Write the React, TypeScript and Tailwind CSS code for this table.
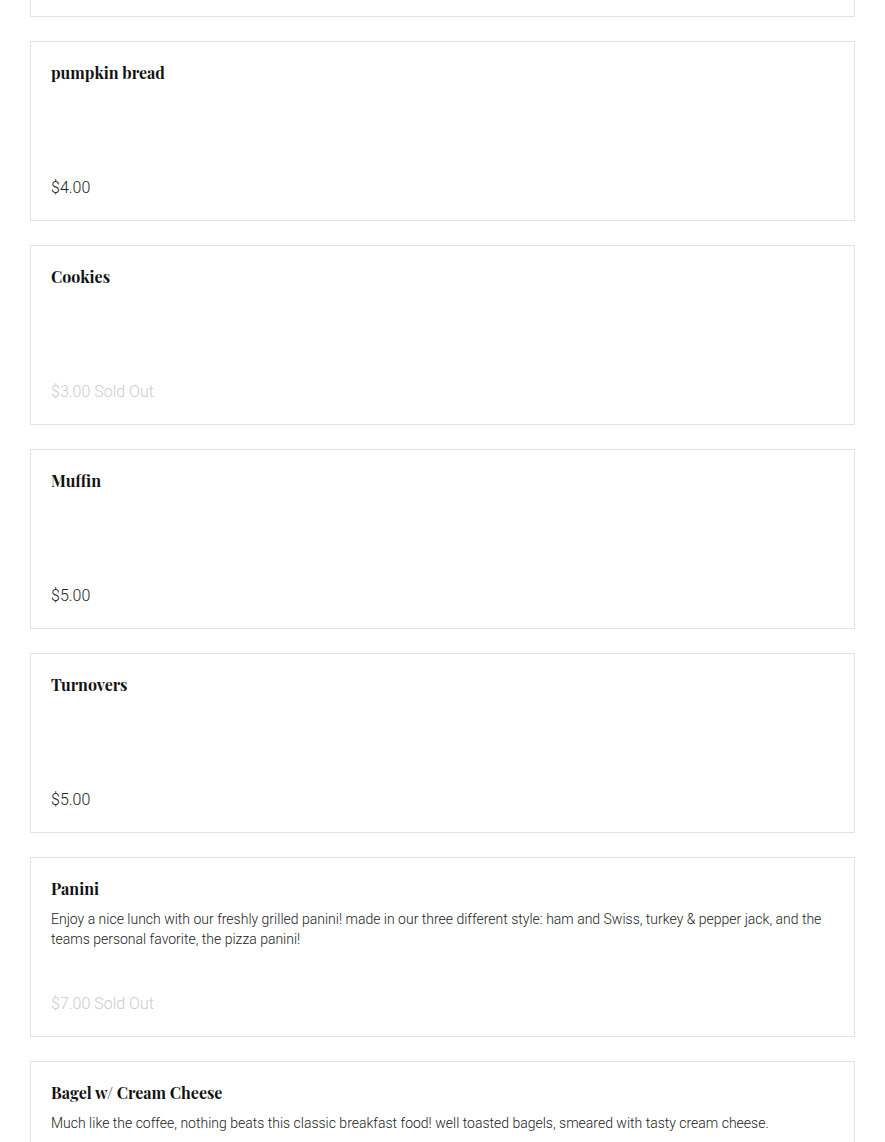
import React from 'react'

type Item = {
  name: string
  desc?: string
  price: string
  soldOut?: boolean
}

const items: Item[] = [
  { name: 'Coffee', price: '$3.00' },
  { name: 'pumpkin bread', price: '$4.00' },
  { name: 'Cookies', price: '$3.00', soldOut: true },
  { name: 'Muffin', price: '$5.00' },
  { name: 'Turnovers', price: '$5.00' },
  {
    name: 'Panini',
    desc: 'Enjoy a nice lunch with our freshly grilled panini! made in our three different style: ham and Swiss, turkey & pepper jack, and the teams personal favorite, the pizza panini!',
    price: '$7.00',
    soldOut: true,
  },
  {
    name: 'Bagel w/ Cream Cheese',
    desc: 'Much like the coffee, nothing beats this classic breakfast food! well toasted bagels, smeared with tasty cream cheese.',
    price: '$3.00',
  },
]

const MenuCard = ({ item }: { item: Item }) => (
  <div className="flex h-[180px] flex-col justify-between border border-[#e3e3e3] bg-white p-5">
    <div>
      <h3 className="-mt-px font-['Playfair_Display','Liberation_Serif',serif] text-[16px] font-bold leading-6 text-[#111]">
        {item.name}
      </h3>
      {item.desc && (
        <p className="mt-[8px] text-[14px] font-light leading-5 text-[#222]">{item.desc}</p>
      )}
    </div>
    <div
      className={`text-[16px] font-light leading-6 ${item.soldOut ? 'text-[#cccccc]' : 'text-[#222]'}`}
    >
      {item.price}
      {item.soldOut && ' Sold Out'}
    </div>
  </div>
)

export default function App() {
  return (
    <div className="h-[1142px] overflow-hidden bg-white font-['Roboto',sans-serif]">
      <div className="-mt-[163px] flex flex-col gap-6 px-[30px]">
        {items.map((item) => (
          <MenuCard key={item.name} item={item} />
        ))}
      </div>
    </div>
  )
}
